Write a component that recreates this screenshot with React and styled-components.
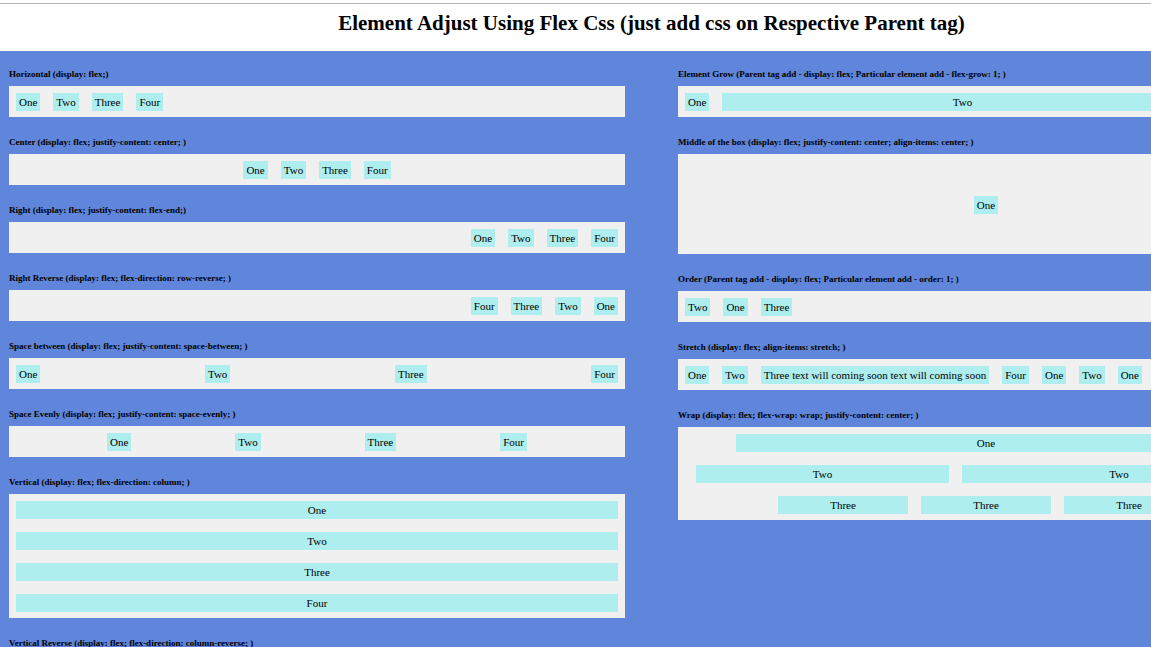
import React from "react";
import styled, { createGlobalStyle } from "styled-components";

const GlobalStyle = createGlobalStyle`
  * {
    box-sizing: border-box;
  }
  body {
    margin: 0;
    overflow-x: hidden;
    background: #5f86db;
    color: #000;
    font-family: "Liberation Serif", "Times New Roman", serif;
    font-size: 11px;
    line-height: 12px;
  }
`;

/* The canvas is wider than the window, so its right edge runs out of view. */
const Page = styled.div`
  width: calc(100% + 152px);
  min-height: 100vh;
  padding-top: 3px;
  background: #fff;
`;

const Header = styled.header`
  padding: 7px 8px 16px;
  border-top: 1px solid #b4b4b4;
  text-align: center;
`;

const Title = styled.h1`
  margin: 0;
  font-size: 21px;
  line-height: 24px;
`;

const Main = styled.main`
  display: grid;
  grid-template-columns: 1fr 1fr;
  align-items: start;
  column-gap: 53px;
  min-height: calc(100vh - 51px);
  padding: 18px 9px;
  background: #5f86db;
`;

const Column = styled.div`
  display: flex;
  flex-direction: column;
  gap: 20px;
`;

const Heading = styled.h2`
  margin: 0 0 6px;
  font-size: 9px;
  line-height: 11px;
`;

const Box = styled.div`
  display: flex;
  flex-direction: ${(p) => p.$direction || "row"};
  flex-wrap: ${(p) => p.$wrap || "nowrap"};
  justify-content: ${(p) => p.$justify || "flex-start"};
  align-items: ${(p) => p.$align || "stretch"};
  gap: 13px;
  min-height: ${(p) => p.$minHeight || "31px"};
  padding: 7px 7px 6px;
  background: #f0f0f0;
`;

const Item = styled.div`
  flex-grow: ${(p) => p.$grow || 0};
  order: ${(p) => p.$order || 0};
  width: ${(p) => p.$width || "auto"};
  padding: 3px;
  background: #afeeee;
  text-align: center;
`;

const four = [{ text: "One" }, { text: "Two" }, { text: "Three" }, { text: "Four" }];

const left = [
  { title: "Horizontal (display: flex;)", items: four },
  {
    title: "Center (display: flex; justify-content: center; )",
    justify: "center",
    items: four,
  },
  {
    title: "Right (display: flex; justify-content: flex-end;)",
    justify: "flex-end",
    items: four,
  },
  {
    title: "Right Reverse (display: flex; flex-direction: row-reverse; )",
    direction: "row-reverse",
    items: four,
  },
  {
    title: "Space between (display: flex; justify-content: space-between; )",
    justify: "space-between",
    items: four,
  },
  {
    title: "Space Evenly (display: flex; justify-content: space-evenly; )",
    justify: "space-evenly",
    items: four,
  },
  {
    title: "Vertical (display: flex; flex-direction: column; )",
    direction: "column",
    items: four,
  },
  {
    title: "Vertical Reverse (display: flex; flex-direction: column-reverse; )",
    direction: "column-reverse",
    items: four,
  },
];

const right = [
  {
    title:
      "Element Grow (Parent tag add - display: flex; Particular element add - flex-grow: 1; )",
    items: [{ text: "One" }, { text: "Two", grow: 1 }, { text: "Three" }, { text: "Four" }],
  },
  {
    title: "Middle of the box (display: flex; justify-content: center; align-items: center; )",
    justify: "center",
    align: "center",
    minHeight: "100px",
    items: [{ text: "One" }],
  },
  {
    title: "Order (Parent tag add - display: flex; Particular element add - order: 1; )",
    items: [{ text: "One", order: 1 }, { text: "Two" }, { text: "Three", order: 2 }],
  },
  {
    title: "Stretch (display: flex; align-items: stretch; )",
    items: [
      { text: "One" },
      { text: "Two" },
      { text: "Three text will coming soon text will coming soon" },
      { text: "Four" },
      { text: "One" },
      { text: "Two" },
      { text: "One" },
    ],
  },
  {
    title: "Wrap (display: flex; flex-wrap: wrap; justify-content: center; )",
    wrap: "wrap",
    justify: "center",
    items: [
      { text: "One", width: "500px" },
      { text: "Two", width: "253px" },
      { text: "Two", width: "314px" },
      { text: "Three", width: "130px" },
      { text: "Three", width: "130px" },
      { text: "Three", width: "130px" },
    ],
  },
];

function Example({ title, items, direction, wrap, justify, align, minHeight }) {
  return (
    <section>
      <Heading>{title}</Heading>
      <Box
        $direction={direction}
        $wrap={wrap}
        $justify={justify}
        $align={align}
        $minHeight={minHeight}
      >
        {items.map((item, i) => (
          <Item key={i} $grow={item.grow} $order={item.order} $width={item.width}>
            {item.text}
          </Item>
        ))}
      </Box>
    </section>
  );
}

export default function App() {
  return (
    <>
      <GlobalStyle />
      <Page>
        <Header>
          <Title>Element Adjust Using Flex Css (just add css on Respective Parent tag)</Title>
        </Header>
        <Main>
          <Column>
            {left.map((e) => (
              <Example key={e.title} {...e} />
            ))}
          </Column>
          <Column>
            {right.map((e) => (
              <Example key={e.title} {...e} />
            ))}
          </Column>
        </Main>
      </Page>
    </>
  );
}
